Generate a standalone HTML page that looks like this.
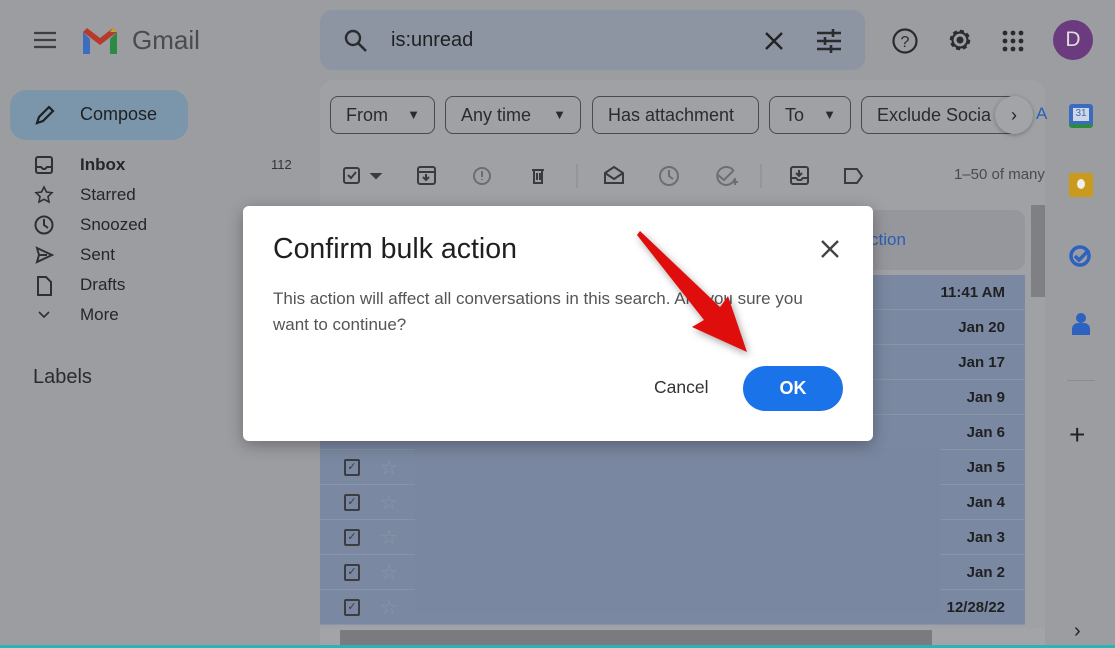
<!DOCTYPE html>
<html><head><meta charset="utf-8"><style>
*{box-sizing:border-box;margin:0;padding:0}
body{width:1115px;height:648px;overflow:hidden;background:#9c9da1;font-family:"Liberation Sans",Arial,sans-serif;position:relative;color:#222}
.abs{position:absolute}
.nav{position:absolute;left:80px;font-size:17px;color:#252628}
.chip{position:absolute;top:96px;height:38px;border:1px solid #4a4b4e;border-radius:8px;font-size:18px;color:#2a2b2d;padding:0 15px;line-height:36px;white-space:nowrap}
.chip b{position:absolute;right:14px;top:0;font-weight:normal;font-size:13px}
.row{position:absolute;left:320px;width:705px;height:35px;background:#7a88a1;border-bottom:1px solid #8994a8}
.date{position:absolute;right:20px;top:9px;font-size:15px;font-weight:bold;color:#1f2022}
.cb{position:absolute;left:24px;top:9px;width:16px;height:17px;border:2px solid #3c3d40;border-radius:2px;font-size:11px;line-height:13px;text-align:center;color:#3c3d40}
.star{position:absolute;left:60px;top:5px;font-size:20px;color:#8e96a8}
</style></head><body>
<!-- header -->
<svg class="abs" style="left:33px;top:31px" width="24" height="18"><path d="M1 2h22M1 9h22M1 16h22" stroke="#3d3e40" stroke-width="2.2"/></svg>
<svg class="abs" style="left:80px;top:26px" width="40" height="29" viewBox="0 0 40 29">
<path d="M3 6v22h7V13z" fill="#3d6dbf"/><path d="M30 13v15h7V6z" fill="#2c8a44"/><path d="M3 6l17 13 17-13-4-4-13 10L7 2z" fill="#b73a2e"/><path d="M30 6l7 0-4-4z" fill="#c8a42a"/></svg>
<div class="abs" style="left:132px;top:25px;font-size:26px;color:#4a4b4e">Gmail</div>
<div class="abs" style="left:320px;top:10px;width:545px;height:60px;border-radius:12px;background:#8d95a3"></div>
<svg class="abs" style="left:343px;top:28px" width="26" height="26"><circle cx="10" cy="10" r="7" stroke="#2a2b2d" stroke-width="2.4" fill="none"/><path d="M15 15l8 8" stroke="#2a2b2d" stroke-width="2.6"/></svg>
<div class="abs" style="left:391px;top:29px;font-size:20px;color:#1f2022">is:unread</div>
<svg class="abs" style="left:764px;top:31px" width="20" height="20"><path d="M2 2l16 16M18 2L2 18" stroke="#222" stroke-width="2.4"/></svg>
<svg class="abs" style="left:817px;top:29px" width="24" height="24"><path d="M0 4h24M0 12h24M0 20h24" stroke="#2a2b2d" stroke-width="2.4"/><path d="M16 0v8M8 8v8M14 16v8" stroke="#2a2b2d" stroke-width="2.6"/></svg>
<svg class="abs" style="left:891px;top:27px" width="28" height="28"><circle cx="14" cy="14" r="11.5" stroke="#2a2b2d" stroke-width="2.2" fill="none"/><text x="14" y="20" font-size="16" text-anchor="middle" font-family="Liberation Sans" fill="#2a2b2d">?</text></svg>
<svg class="abs" style="left:946px;top:26px" width="28" height="28" viewBox="0 0 28 28"><circle cx="14" cy="14" r="9" stroke="#2a2b2d" stroke-width="2.5" fill="none" stroke-dasharray="4 3"/><circle cx="14" cy="14" r="7.5" stroke="#2a2b2d" stroke-width="2.2" fill="none"/><circle cx="14" cy="14" r="3.5" fill="#2a2b2d"/></svg>
<svg class="abs" style="left:1002px;top:30px" width="22" height="22"><g fill="#2a2b2d"><circle cx="3" cy="3" r="2.4"/><circle cx="11" cy="3" r="2.4"/><circle cx="19" cy="3" r="2.4"/><circle cx="3" cy="11" r="2.4"/><circle cx="11" cy="11" r="2.4"/><circle cx="19" cy="11" r="2.4"/><circle cx="3" cy="19" r="2.4"/><circle cx="11" cy="19" r="2.4"/><circle cx="19" cy="19" r="2.4"/></g></svg>
<div class="abs" style="left:1053px;top:20px;width:40px;height:40px;border-radius:50%;background:#6c3a7f;color:#ddd;font-size:21px;text-align:center;line-height:40px">D</div>
<!-- sidebar -->
<div class="abs" style="left:10px;top:90px;width:178px;height:50px;border-radius:16px;background:#7b96ab"></div>
<svg class="abs" style="left:34px;top:104px" width="22" height="22"><path d="M3 19l2-6L15 3l4 4L9 17z" stroke="#1f2022" stroke-width="2.2" fill="none"/></svg>
<div class="abs" style="left:80px;top:104px;font-size:18px;color:#1f2022">Compose</div>
<div class="nav" style="top:155px;font-weight:bold">Inbox</div><div class="abs" style="left:271px;top:157px;font-size:13px;color:#333">112</div>
<div class="nav" style="top:185px">Starred</div>
<div class="nav" style="top:215px">Snoozed</div>
<div class="nav" style="top:245px">Sent</div>
<div class="nav" style="top:275px">Drafts</div>
<div class="nav" style="top:305px">More</div>
<svg class="abs" style="left:34px;top:155px" width="24" height="180" fill="none" stroke="#2f3033" stroke-width="2">
<rect x="2" y="2" width="16" height="16" rx="2"/><path d="M2 12h5l2 2h2l2-2h5"/>
<path d="M10 32l2.5 5 5.5.7-4 3.8 1 5.5-5-2.7-5 2.7 1-5.5-4-3.8 5.5-.7z" stroke-width="1.6"/>
<circle cx="10" cy="70" r="8.5"/><path d="M10 64v6l4 3"/>
<path d="M3 93l15 7-15 7 2-7z"/><path d="M5 100h8"/>
<path d="M4 122h8l5 5v13H4z"/>
<path d="M5 157l5 5 5-5" stroke-width="1.6"/></svg>
<div class="abs" style="left:33px;top:366px;font-size:20px;color:#2a2b2d">Labels</div>
<!-- main -->
<div class="abs" style="left:320px;top:80px;width:725px;height:568px;border-radius:14px 14px 0 0;background:#a0a1a5"></div>
<div class="chip" style="left:330px;width:105px">From<b>▼</b></div>
<div class="chip" style="left:445px;width:136px">Any time<b>▼</b></div>
<div class="chip" style="left:592px;width:167px">Has attachment</div>
<div class="chip" style="left:769px;width:82px">To<b>▼</b></div>
<div class="chip" style="left:861px;width:150px;border-right:none;border-radius:8px 0 0 8px">Exclude Socia</div>
<div class="abs" style="left:995px;top:96px;width:38px;height:38px;border-radius:50%;background:#a3a4a7;box-shadow:0 1px 4px rgba(0,0,0,.3);text-align:center;line-height:38px;font-size:18px;color:#222">›</div>
<div class="abs" style="left:1036px;top:104px;font-size:17px;color:#2a5fb8">A</div>
<svg class="abs" style="left:340px;top:162px" width="540" height="28" fill="none" stroke="#3a3b3e" stroke-width="2">
<rect x="4" y="6" width="15" height="15" rx="2"/><path d="M8 13l3 3 5-6"/><path d="M32 12l4 4 4-4z" fill="#3a3b3e"/>
<rect x="78" y="5" width="17" height="17" rx="2"/><path d="M78 10h17M86 12v6M83 15l3 3 3-3"/>
<circle cx="142" cy="14" r="8" stroke="#6d6e72"/><path d="M142 9v6M142 17v1" stroke="#6d6e72"/>
<path d="M192 8h12M194 8v13h8V8M197 11v7M200 11v7"/>
<path d="M237 2v24" stroke="#8a8b8e" stroke-width="1"/>
<path d="M265 11l9-6 9 6v10h-18z M265 11l9 6 9-6"/>
<circle cx="329" cy="14" r="9" stroke="#6d6e72"/><path d="M329 8v6l4 3" stroke="#6d6e72"/>
<path d="M393 8a9 9 0 1 0 2 8M378 13l6 5 10-10M392 20h6M395 17v6" stroke="#6d6e72"/>
<path d="M421 2v24" stroke="#8a8b8e" stroke-width="1"/>
<rect x="451" y="5" width="17" height="17" rx="2"/><path d="M451 16h5l2 2h3l2-2h5M459 8v6M456 11l3 3 3-3"/>
<path d="M505 7h12l5 7-5 7h-12z"/>
<g fill="#3a3b3e" stroke="none"><circle cx="564" cy="7" r="2"/><circle cx="564" cy="14" r="2"/><circle cx="564" cy="21" r="2"/></g>
</svg>
<div class="abs" style="left:954px;top:166px;font-size:15px;color:#4a4b4e">1–50 of many</div>
<div class="abs" style="left:320px;top:210px;width:705px;height:60px;border-radius:10px;background:#96979c"></div>
<div class="abs" style="left:870px;top:230px;font-size:17px;color:#2a5fb8">ction</div>
<div class="row" style="top:275px"><div class="date">11:41 AM</div></div>
<div class="row" style="top:310px"><div class="date">Jan 20</div></div>
<div class="row" style="top:345px"><div class="date">Jan 17</div></div>
<div class="row" style="top:380px"><div class="date">Jan 9</div></div>
<div class="row" style="top:415px"><div class="date">Jan 6</div></div>
<div class="row" style="top:450px"><div class="cb">✓</div><div class="star">☆</div><div class="date">Jan 5</div></div>
<div class="row" style="top:485px"><div class="cb">✓</div><div class="star">☆</div><div class="date">Jan 4</div></div>
<div class="row" style="top:520px"><div class="cb">✓</div><div class="star">☆</div><div class="date">Jan 3</div></div>
<div class="row" style="top:555px"><div class="cb">✓</div><div class="star">☆</div><div class="date">Jan 2</div></div>
<div class="row" style="top:590px"><div class="cb">✓</div><div class="star">☆</div><div class="date">12/28/22</div></div>
<div class="abs" style="left:415px;top:448px;width:525px;height:165px;background:#7a87a0"></div>
<div class="abs" style="left:320px;top:628px;width:725px;height:20px;background:#a3a4a7"></div>
<div class="abs" style="left:340px;top:630px;width:592px;height:15px;background:#7a7b7e"></div>
<div class="abs" style="left:1031px;top:205px;width:14px;height:92px;background:#7f8083"></div>
<!-- right rail -->
<div class="abs" style="left:1069px;top:104px;width:24px;height:24px;border-radius:3px;background:#3b6bc0;border-bottom:4px solid #2c8a44"><div style="margin:4px;background:#cfd6e4;height:13px;font-size:10px;text-align:center;color:#3b6bc0">31</div></div>
<div class="abs" style="left:1069px;top:173px;width:24px;height:24px;border-radius:3px;background:#c99a1b"><div style="margin:6px 8px;width:8px;height:10px;border-radius:50%;background:#eee"></div></div>
<svg class="abs" style="left:1068px;top:243px" width="26" height="26"><circle cx="12" cy="13" r="9" stroke="#2d62c0" stroke-width="3.5" fill="none"/><path d="M7 13l4 4 10-10" stroke="#2d62c0" stroke-width="3.5" fill="none"/></svg>
<svg class="abs" style="left:1071px;top:312px" width="20" height="24"><circle cx="10" cy="6" r="5" fill="#2d62c0"/><path d="M1 23v-6a6 6 0 0 1 6-6h6a6 6 0 0 1 6 6v6z" fill="#2d62c0"/></svg>
<div class="abs" style="left:1067px;top:380px;width:28px;height:1px;background:#8a8b8e"></div>
<div class="abs" style="left:1069px;top:420px;font-size:28px;color:#222;line-height:30px">+</div>
<div class="abs" style="left:1074px;top:620px;font-size:20px;color:#222">›</div>
<div class="abs" style="left:0;top:645px;width:1115px;height:3px;background:#2bb3b8"></div>
<!-- dialog -->
<div class="abs" style="left:243px;top:206px;width:630px;height:235px;background:#fff;border-radius:6px;box-shadow:0 4px 16px rgba(0,0,0,.3)"></div>
<div class="abs" style="left:273px;top:233px;font-size:28.5px;color:#1f1f1f">Confirm bulk action</div>
<svg class="abs" style="left:821px;top:240px" width="18" height="18"><path d="M1 1l16 16M17 1L1 17" stroke="#444" stroke-width="2.4"/></svg>
<div class="abs" style="left:273px;top:286px;width:570px;font-size:17px;line-height:26px;color:#555">This action will affect all conversations in this search. Are you sure you want to continue?</div>
<div class="abs" style="left:654px;top:377px;font-size:17.5px;color:#333">Cancel</div>
<div class="abs" style="left:743px;top:366px;width:100px;height:45px;border-radius:23px;background:#1a73e8;color:#fff;font-size:18px;font-weight:bold;text-align:center;line-height:45px">OK</div>
<svg class="abs" style="left:0;top:0" width="1115" height="648"><defs><filter id="s"><feDropShadow dx="2" dy="3" stdDeviation="4" flood-opacity=".35"/></filter></defs>
<polygon points="640,231 720,307 728,296 747,352 692,327 704,320 637,235" fill="#e00b0b" filter="url(#s)"/></svg>
</body></html>
